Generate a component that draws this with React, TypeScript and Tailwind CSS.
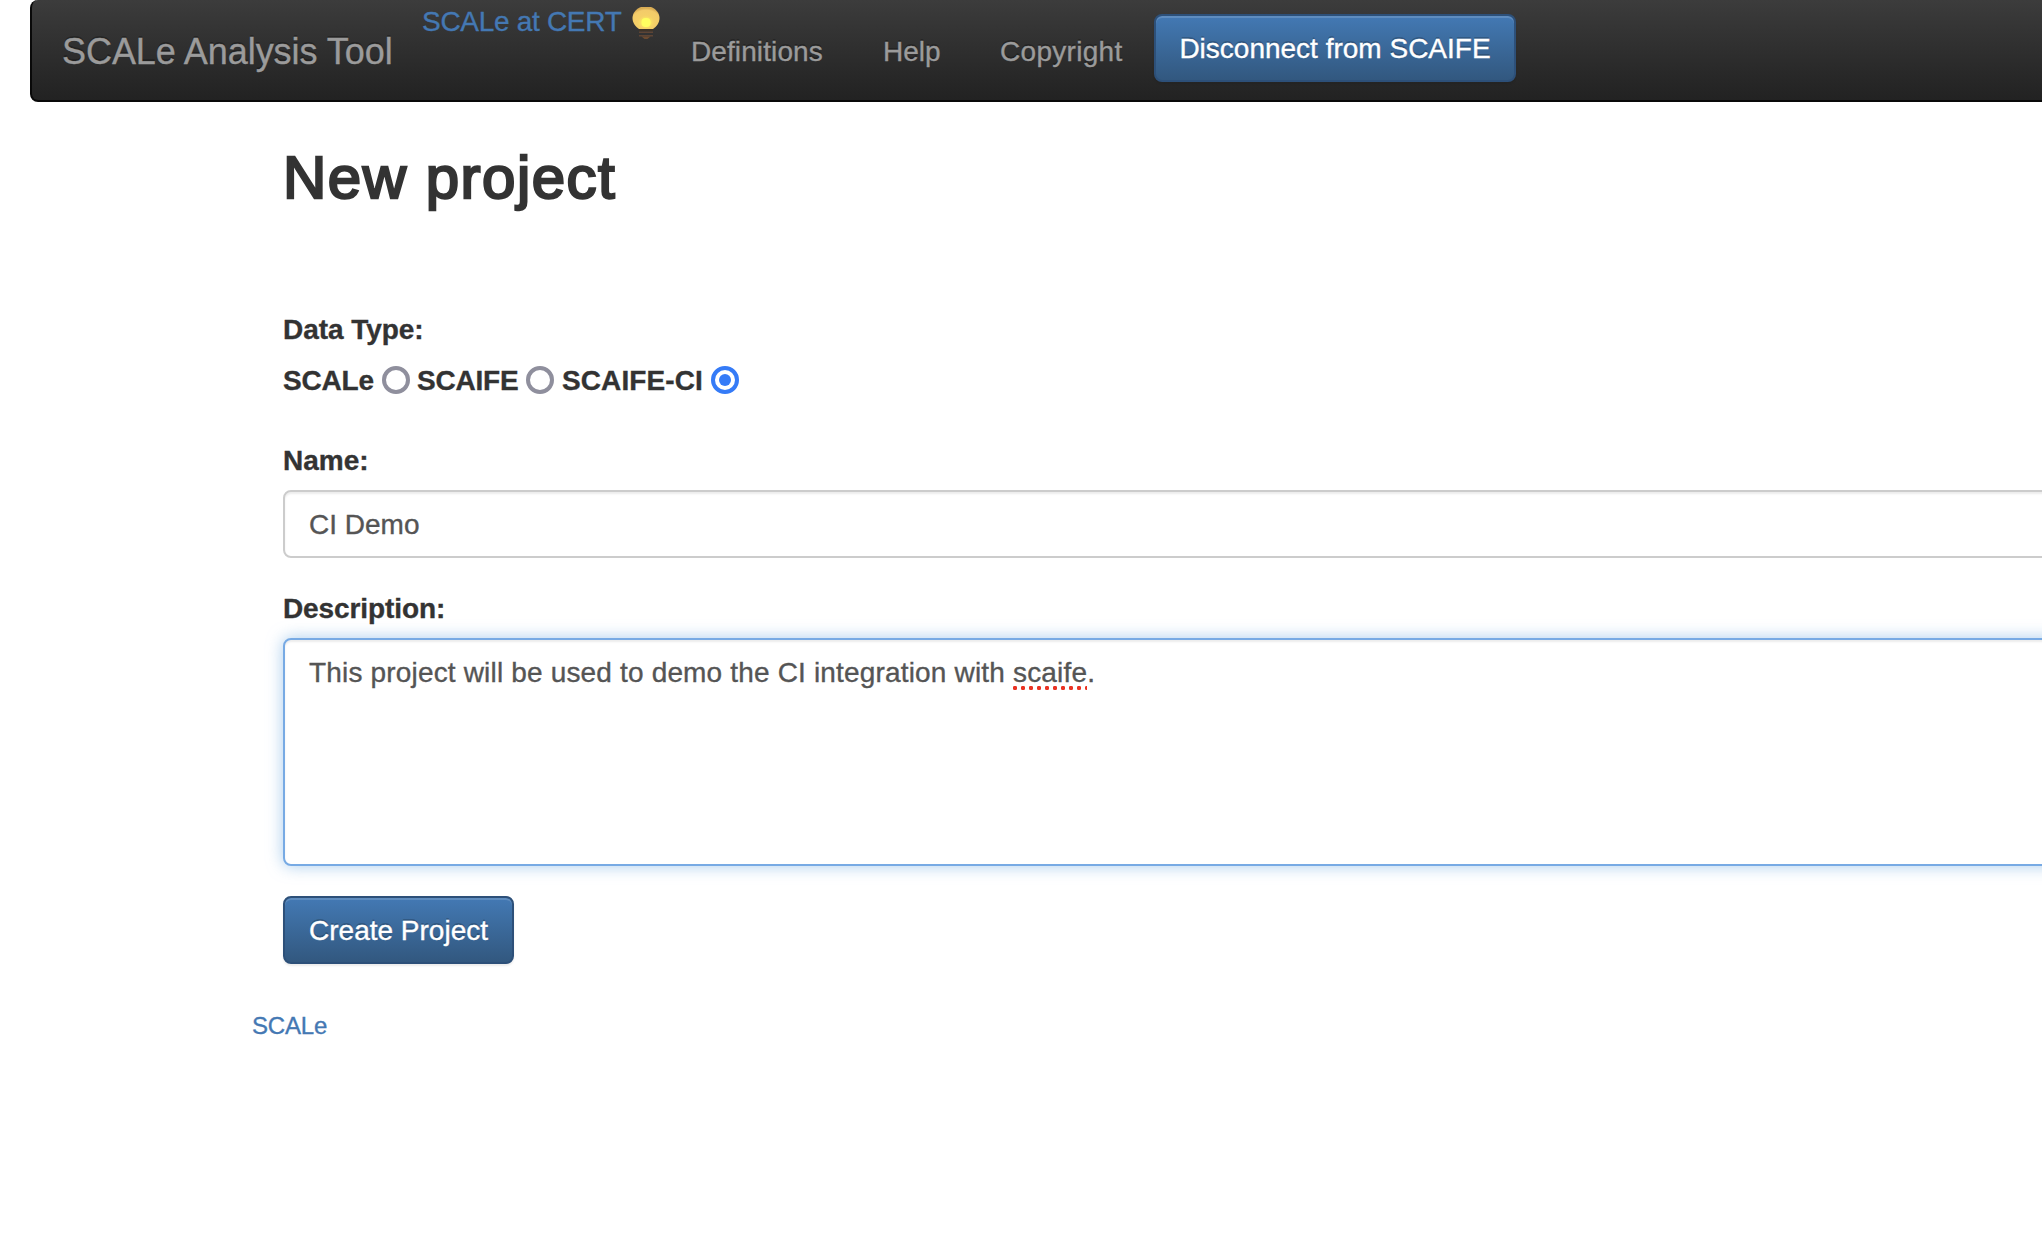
import React from "react";

function Bulb() {
  return (
    <svg width="28" height="34" viewBox="0 0 28 34" className="block">
      <defs>
        <radialGradient id="glass" cx="50%" cy="70%" r="65%">
          <stop offset="0%" stopColor="#ffff6a" />
          <stop offset="30%" stopColor="#fae064" />
          <stop offset="46%" stopColor="#f5d067" />
          <stop offset="85%" stopColor="#f3cb69" />
          <stop offset="100%" stopColor="#d9ad55" />
        </radialGradient>
      </defs>
      <path
        d="M9 0h10c5 2 8.500 6 8.500 11 0 5-3 8.500-6.500 11H7C3.500 19.500.5 16 .5 11 .5 6 4 2 9 0z"
        fill="url(#glass)"
      />
      <rect x="9.500" y="11" width="9" height="9" rx="4" fill="#ffff60" />
      <rect x="7" y="22" width="14" height="2" fill="#3f3428" />
      <rect x="7" y="24.500" width="14" height="1.500" fill="#5e4535" />
      <rect x="7" y="28" width="14" height="1.500" fill="#5e4535" />
      <path d="M9.500 29.500h9l-3 2.500h-3z" fill="#6b4a30" />
    </svg>
  );
}

function Radio({ checked = false }: { checked?: boolean }) {
  return (
    <span
      className={
        checked
          ? "mt-[6px] flex size-7 shrink-0 items-center justify-center rounded-full border-4 border-[#357bf7] bg-white"
          : "mt-[6px] block size-7 shrink-0 rounded-full border-4 border-[#8f8f9d] bg-white"
      }
    >
      {checked && <span className="size-3 rounded-full bg-[#357bf7]" />}
    </span>
  );
}

const button =
  "block h-[68px] rounded-lg border-2 border-[#2d5079] bg-linear-to-b from-[#4379b4] to-[#32587f] pt-0.5 text-center leading-[62px] text-white whitespace-nowrap [text-shadow:0_-2px_0_rgba(0,0,0,0.2)] shadow-[inset_0_2px_0_rgba(255,255,255,0.15),0_2px_2px_rgba(0,0,0,0.075)]";

export default function App() {
  return (
    <div className="h-[1236px] w-[2042px] overflow-hidden bg-white font-['Liberation_Sans',Arial,sans-serif] text-[28px] leading-[42px] text-[#333] [-webkit-text-stroke:0.35px_currentColor]">
      <nav className="ml-[30px] flex h-[102px] w-[2100px] items-start rounded-lg border-2 border-t-0 border-[#090909] bg-linear-to-b from-[#3c3c3c] to-[#222] whitespace-nowrap text-[#9b9b9b] [text-shadow:0_-2px_0_rgba(0,0,0,0.25)]">
        <a className="ml-[30px] mt-[31px] w-[360px] text-[36px] tracking-[-0.05px]">SCALe Analysis Tool</a>
        <a className="mt-px w-[210px] tracking-[-0.3px] text-[#4478b3] [text-shadow:none]">SCALe at CERT</a>
        <span className="mt-[7px] w-[59px]"><Bulb /></span>
        <a className="mt-[31px] w-[192px] tracking-[0.1px]">Definitions</a>
        <a className="mt-[31px] w-[117px]">Help</a>
        <a className="mt-[31px] w-[154px] tracking-[0.3px]">Copyright</a>
        <button className={`${button} mt-[14px] w-[362px]`}>Disconnect from SCAIFE</button>
      </nav>

      <main className="ml-[283px] w-[1900px]">
        <h1 className="pt-[43px] text-[60px] leading-[66px] tracking-[1.5px] [-webkit-text-stroke:2.4px_#333]">New project</h1>
        <p className="mt-[98px] font-bold tracking-[-0.05px]">Data Type:</p>
        <div className="mt-[9px] flex h-[42px] items-start font-bold whitespace-nowrap">
          <span className="w-[99px] tracking-[-0.2px]">SCALe</span>
          <Radio />
          <span className="ml-[7px] w-[109px] tracking-[-0.2px]">SCAIFE</span>
          <Radio />
          <span className="ml-[8px] w-[149px] tracking-[0.1px]">SCAIFE-CI</span>
          <Radio checked />
        </div>
        <label className="mt-[38px] block font-bold">Name:</label>
        <input
          readOnly
          value="CI Demo"
          className="mt-[8px] block h-[68px] w-full rounded-lg border-2 border-[#ccc] bg-white px-6 pt-0.5 text-[#555] shadow-[inset_0_2px_2px_rgba(0,0,0,0.075)] outline-none"
        />
        <label className="mt-[30px] block font-bold tracking-[-0.1px]">Description:</label>
        <div
          role="textbox"
          className="mt-[8px] h-[228px] rounded-lg border-2 border-[#77aae4] bg-white px-6 py-3 tracking-[0.17px] text-[#555] shadow-[inset_0_2px_2px_rgba(0,0,0,0.075),0_0_16px_rgba(110,170,225,0.6)]"
        >
          This project will be used to demo the CI integration with{" "}
          <span className="bg-[radial-gradient(circle_at_2px_2px,#ea3323_1.900px,transparent_2.500px)] bg-[length:8px_5px] bg-bottom-left bg-repeat-x pb-[3px]">scaife</span>.
        </div>
        <button className={`${button} mt-[30px] w-[231px]`}>Create Project</button>
      </main>

      <footer className="ml-[252px] mt-[44px] text-2xl leading-[36px] tracking-[-0.2px] text-[#4478b3]">SCALe</footer>
    </div>
  );
}
